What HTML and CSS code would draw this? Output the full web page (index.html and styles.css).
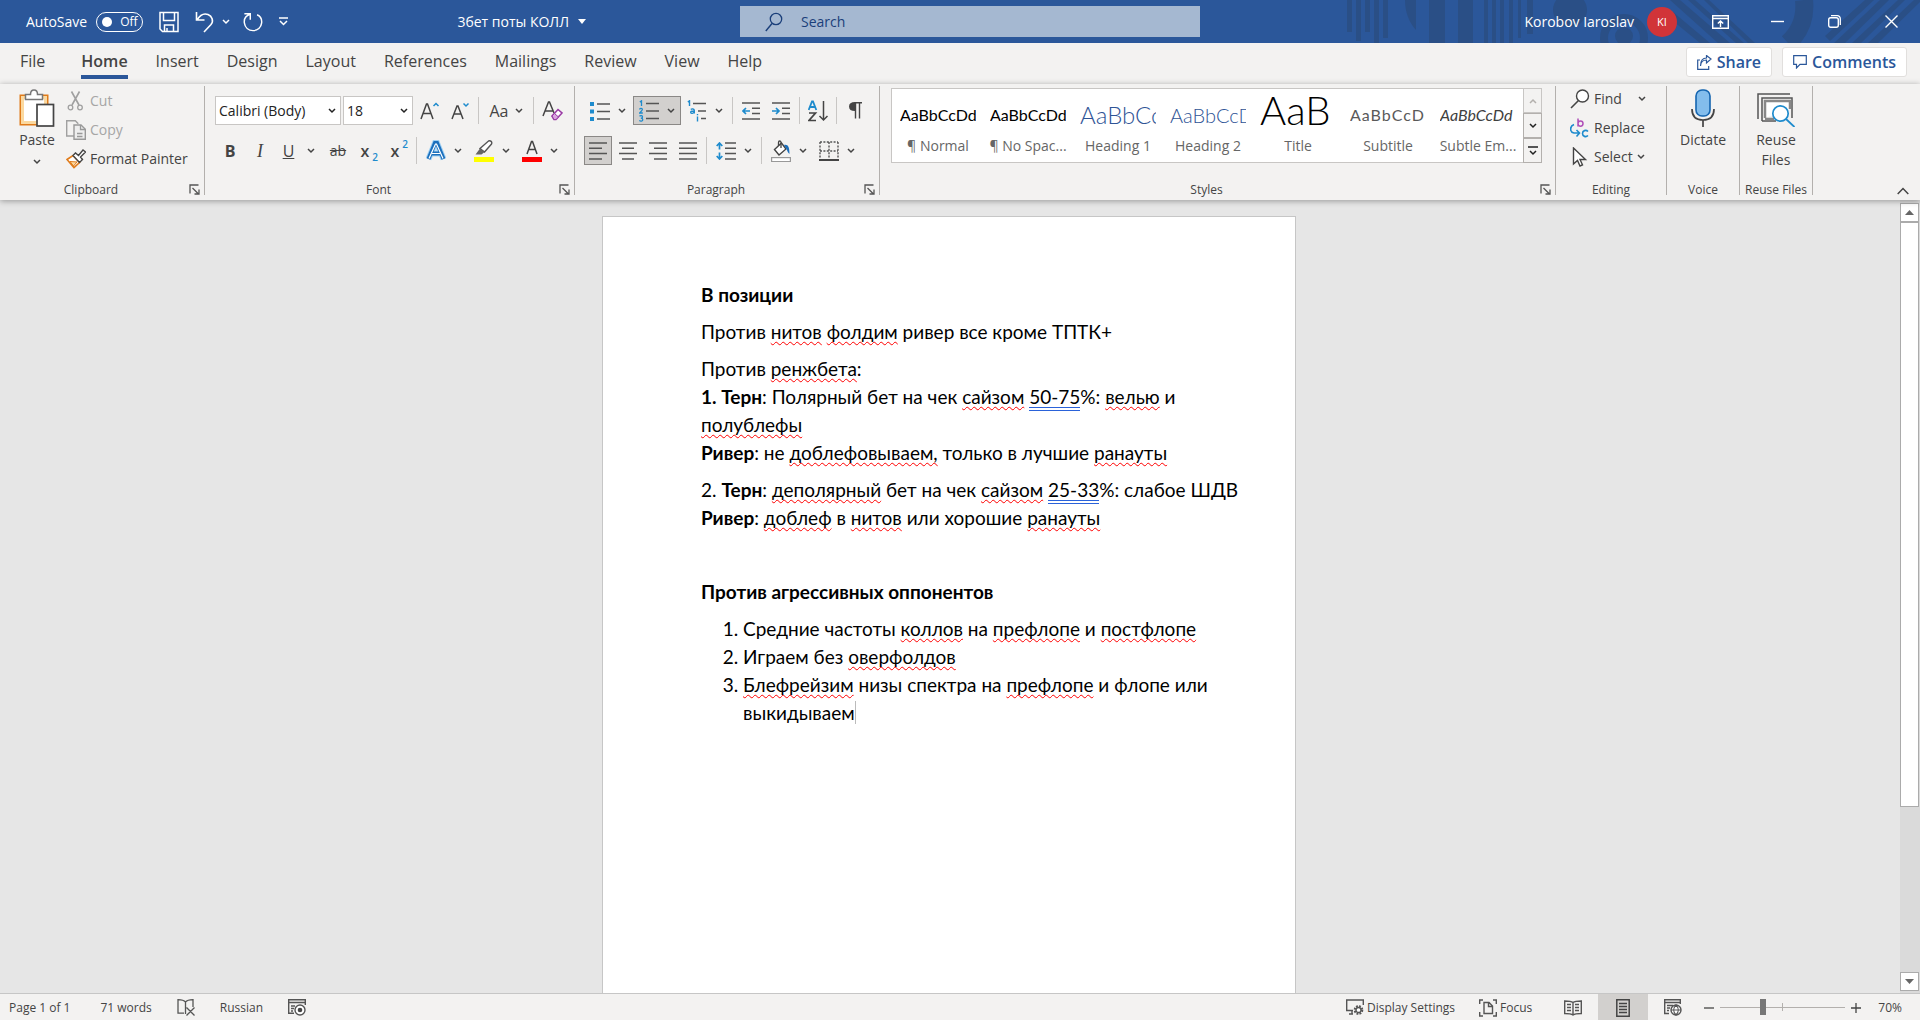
FILE: index.html
```html
<!DOCTYPE html>
<html lang="en">
<head>
<meta charset="utf-8">
<title>3бет поты КОЛЛ - Word</title>
<link rel="stylesheet" href="styles.css">
</head>
<body>
<svg class="defs" aria-hidden="true">
  <symbol id="chev" viewBox="0 0 8 6"><path d="M1 1l3 3 3-3" fill="none" stroke="currentColor" stroke-width="1.5"/></symbol>
  <symbol id="launch" viewBox="0 0 11 11"><path d="M1 9.500V1H9.500M3.500 4l5.500 5.500M10 5.500v4.500H5.500" fill="none" stroke="#555" stroke-width="1.300"/></symbol>
</svg>
<div class="app">
  <header class="titlebar">
    <svg class="pattern" viewBox="0 0 580 43" width="580" height="43" aria-hidden="true">
      <g fill="#2a4f86">
        <path d="M7 0h5v32H7zM16 0h5v41h-5zM25 0h5v32h-5zM34 0h5v43h-5zM43 0h5v38h-5zM65 0h11v30C69 22 65 12 65 0zM89 0h16v43H89zM118 0h15v43h-15zM144 0h4v43h-4zM152 0h4v43h-4zM160 0h4v43h-4zM169 0h4v43h-4zM178 0h3v38h-3zM187 0h6v34h-6z"/>
        <circle cx="230" cy="10" r="17"/><circle cx="284" cy="36" r="9"/>
        <path d="M330 0h10l50 43h-12zM348 0h7l49 43h-8zM364 0h5l46 43h-7zM333 12l37 31h-10l-27-22z"/>
        <path d="M485 36l40-36h9l-44 41zM494 43l46-43h9l-44 43zM512 43l46-43h7l-44 43zM528 43l46-43h6v2l-42 41z"/>
      </g>
      <circle cx="284" cy="38" r="20" fill="none" stroke="#2a4f86" stroke-width="8"/>
      <path d="M464 0c2 18-4 32-16 43" fill="none" stroke="#2a4f86" stroke-width="18"/>
    </svg>
    <div class="title-left">
      <span id="as">AutoSave</span>
      <button class="toggle" role="switch" aria-checked="false" aria-labelledby="as"><i></i>Off</button>
      <button class="qa save" aria-label="Save"><svg width="20" height="22" viewBox="0 0 20 22"><path d="M1 1.500h18v19H3.500L1 18zM4.500 1.500v8h11v-8M5.500 20.500v-6.500h9v6.500M8 17v3.500" fill="none" stroke="#fff" stroke-width="1.500"/></svg></button>
      <button class="qa undo" aria-label="Undo"><svg width="20" height="22" viewBox="0 0 20 22"><path d="M1.500 1v8h8M2 9C5 4 9 2 13 3.500c4 1.500 6 6.500 3 10L9 21" fill="none" stroke="#fff" stroke-width="1.600"/></svg><svg class="c"><use href="#chev"/></svg></button>
      <button class="qa redo" aria-label="Repeat"><svg width="20" height="22" viewBox="0 0 22 22"><path d="M1.500 2h6.500v6.500M8 2.500C3 4 1 8 1.500 12c.7 5 4.500 8.500 9.500 8.500s9-3.500 9.500-8.500c.4-4-1.500-7.500-5-9" fill="none" stroke="#fff" stroke-width="1.600"/></svg></button>
      <button class="qa" aria-label="Customize Quick Access Toolbar"><svg width="9" height="9" viewBox="0 0 9 9"><path d="M0 1h9M1 4l3.500 3.500L8 4" fill="none" stroke="#fff" stroke-width="1.500"/></svg></button>
      <button class="docname">3бет поты КОЛЛ <svg width="8" height="5" viewBox="0 0 8 5"><path d="M0 0h8L4 5z" fill="#fff"/></svg></button>
    </div>
    <label class="search"><svg width="18" height="20" viewBox="0 0 18 20"><circle cx="11" cy="7" r="5.700" fill="none" stroke="#1b3f7a" stroke-width="1.300"/><path d="M7 11.500L.8 19" stroke="#1b3f7a" stroke-width="1.400"/></svg><input type="text" placeholder="Search" aria-label="Search"></label>
    <div class="title-right">
      <span>Korobov Iaroslav</span><span class="avatar">KI</span>
      <button class="win rd" aria-label="Ribbon Display Options"><svg width="17" height="14" viewBox="0 0 17 14"><path d="M.7.700h15.600v12.600H.7zM.7 3.500h15.600M8.500 12V6M5.800 8.500L8.500 6l2.700 2.500" fill="none" stroke="#fff" stroke-width="1.400"/></svg></button>
      <button class="win" aria-label="Minimize"><svg width="13" height="13" viewBox="0 0 13 13"><path d="M0 6.500h13" stroke="#fff" stroke-width="1.400"/></svg></button>
      <button class="win" aria-label="Restore"><svg width="13" height="13" viewBox="0 0 13 13"><rect x=".7" y="2.700" width="9.600" height="9.600" rx="2" fill="none" stroke="#fff" stroke-width="1.400"/><path d="M3 .7h6.300a3 3 0 0 1 3 3V10" fill="none" stroke="#fff" stroke-width="1.300"/></svg></button>
      <button class="win" aria-label="Close"><svg width="13" height="13" viewBox="0 0 13 13"><path d="M.5.500l12 12M12.500.500l-12 12" stroke="#fff" stroke-width="1.400"/></svg></button>
    </div>
  </header>

  <nav class="tabs">
    <button>File</button><button class="active">Home</button><button>Insert</button><button>Design</button><button>Layout</button><button>References</button><button>Mailings</button><button>Review</button><button>View</button><button>Help</button>
    <div class="tab-actions">
      <button><svg width="15" height="15" viewBox="0 0 15 15"><path d="M3 5H.7v9.300h11V11M3.500 11c.3-4 2.500-6 6-6v3l4.500-4L9.500.500V3C5.500 3 3.500 6 3.500 11z" fill="none" stroke="#2b579a" stroke-width="1.200"/></svg>Share</button>
      <button><svg width="14" height="14" viewBox="0 0 14 14"><path d="M.7.700h12.600v8.600H7L3.500 13V9.300H.7z" fill="none" stroke="#2b579a" stroke-width="1.200"/></svg>Comments</button>
    </div>
  </nav>

  <div class="ribbon">
    <section class="group clip">
      <div class="body">
        <button class="big paste"><svg width="36" height="38" viewBox="0 0 36 38"><path d="M1.500 6.500h27v29h-27z" fill="#fff" stroke="#e07b1a" stroke-width="2"/><path d="M3.500 8.500h23v25h-23z" fill="none" stroke="#fbd9a0" stroke-width="3"/><path d="M6.500 10.500V5.500h5C11.500 2.500 13 1 15 1s3.500 1.500 3.500 4.500h5v5z" fill="#fff" stroke="#777" stroke-width="1.500"/><rect x="18" y="15.500" width="16.500" height="21.500" fill="#fff" stroke="#444" stroke-width="1.700"/></svg><span>Paste</span><svg class="c"><use href="#chev"/></svg></button>
        <div class="stack">
          <button disabled><svg width="20" height="20" viewBox="0 0 20 20"><path d="M5.500.500L13 14M13.500.500L6 14" fill="none" stroke="#a0a0a0" stroke-width="1.600"/><circle cx="4.500" cy="16.500" r="2.300" fill="none" stroke="#a0a0a0" stroke-width="1.300"/><circle cx="14" cy="16.500" r="2.300" fill="none" stroke="#a0a0a0" stroke-width="1.300"/></svg>Cut</button>
          <button disabled><svg width="20" height="20" viewBox="0 0 20 20"><path d="M9 16H.7V.700h8.600l3 3" fill="none" stroke="#a0a0a0" stroke-width="1.400"/><path d="M8 5h7l4.300 4.300v10H8z" fill="#eee" stroke="#999" stroke-width="1.400"/><path d="M14.500 5v4.500h4.800M11 13.500h5.500M11 16.500h5.500" fill="none" stroke="#999" stroke-width="1.300"/></svg>Copy</button>
          <button><svg width="20" height="20" viewBox="0 0 20 20"><path d="M1 10.500L7 6.500l6.500 7L8 18.500z" fill="#fff" stroke="#e07b1a" stroke-width="1.600"/><path d="M4 12.500l7 .5-3.500 4z" fill="#fbd9a0" stroke="#e07b1a"/><path d="M7 6.500l2.500-2.500 3 2.500L17 1l2.500 2-5 5 2 2.500-3 3z" fill="#fff" stroke="#444" stroke-width="1.400"/></svg>Format Painter</button>
        </div>
      </div>
      <footer class="l">Clipboard<button aria-label="Clipboard settings"><svg width="11" height="11"><use href="#launch"/></svg></button></footer>
    </section>

    <section class="group font">
      <div class="body rows">
        <div class="row">
          <label class="combo face"><input type="text" value="Calibri (Body)" aria-label="Font"><svg class="c"><use href="#chev"/></svg></label>
          <label class="combo size"><input type="text" value="18" aria-label="Font size"><svg class="c"><use href="#chev"/></svg></label>
          <button class="t" aria-label="Increase font size"><svg width="20" height="20" viewBox="0 0 20 20"><path d="M1 18L6.500 3h1L13 18M3 12.500h8" fill="none" stroke="#444" stroke-width="1.500"/><path d="M13.500 5L16 2.500 18.500 5" fill="none" stroke="#1e8bcd" stroke-width="1.500"/></svg></button>
          <button class="t" aria-label="Decrease font size"><svg width="20" height="20" viewBox="0 0 20 20"><path d="M2 18L7 5h1l5 13M4 13h7" fill="none" stroke="#444" stroke-width="1.500"/><path d="M13.500 2.500L16 5l2.500-2.500" fill="none" stroke="#1e8bcd" stroke-width="1.500"/></svg></button>
          <i class="sep"></i>
          <button class="t split case" aria-label="Change case"><b>Aa</b><svg class="c"><use href="#chev"/></svg></button>
          <i class="sep"></i>
          <button class="t" aria-label="Clear formatting"><svg width="21" height="22" viewBox="0 0 21 22"><path d="M1 16L6.500 2h1L12 13M3 11h8" fill="none" stroke="#444" stroke-width="1.500"/><path d="M10 16l6-6.500 4 3.500-6 6.500h-2z" fill="#fff" stroke="#9a3aa5" stroke-width="1.600"/><path d="M10 16l2.500-2.500 4 3.500-2.500 2.500h-2z" fill="#d9a5df" stroke="#9a3aa5"/></svg></button>
        </div>
        <div class="row">
          <button class="t bold">B</button><button class="t ital">I</button>
          <button class="t split und"><u>U</u><svg class="c"><use href="#chev"/></svg></button>
          <button class="t strike"><s>ab</s></button>
          <button class="t script">x<sub>2</sub></button><button class="t script">x<sup>2</sup></button>
          <i class="sep"></i>
          <button class="t split" aria-label="Text effects"><svg width="20" height="22" viewBox="0 0 20 22"><path d="M2.500 19L9 3h2l6.500 16M5.500 13.500h9" fill="none" stroke="#9fd0f3" stroke-width="6"/><path d="M2.500 19L9 3h2l6.500 16M5.500 13.500h9" fill="none" stroke="#1b6fbc" stroke-width="4"/><path d="M3 18.500L9.500 4h1L17 18.500M6 13.500h8" fill="none" stroke="#fff" stroke-width="1.200"/></svg><svg class="c"><use href="#chev"/></svg></button>
          <button class="t split" aria-label="Text highlight color"><svg width="20" height="22" viewBox="0 0 20 22"><path d="M0 17h20v5H0z" fill="#ff0"/><path d="M6 8.500L14.500 1c2-.8 4 .8 3 3L10.500 12z" fill="#fff" stroke="#555" stroke-width="1.400"/><path d="M6 8.500l4.500 3.500-3 2.500H1.500z" fill="#666"/></svg><svg class="c"><use href="#chev"/></svg></button>
          <button class="t split" aria-label="Font color"><svg width="20" height="22" viewBox="0 0 20 22"><path d="M0 17h20v5H0z" fill="red"/><path d="M5 14L9.500 1.500h1L15 14M6.500 9.500h7" fill="none" stroke="#444" stroke-width="1.500"/></svg><svg class="c"><use href="#chev"/></svg></button>
        </div>
      </div>
      <footer class="l">Font<button aria-label="Font settings"><svg width="11" height="11"><use href="#launch"/></svg></button></footer>
    </section>

    <section class="group para">
      <div class="body rows">
        <div class="row">
          <button class="t split bul" aria-label="Bullets"><svg width="20" height="20" viewBox="0 0 20 20"><path d="M7 3h13M7 10.500h13M7 18h13" stroke="#555" stroke-width="1.600"/><path d="M0 1h4v4H0zM0 8.500h4v4H0zM0 16h4v4H0z" fill="#1e8bcd"/></svg><svg class="c"><use href="#chev"/></svg></button>
          <button class="t split on" aria-label="Numbering"><svg width="20" height="22" viewBox="0 0 20 22"><path d="M7 3.500h13M7 11h13M7 18.500h13" stroke="#555" stroke-width="1.600"/><path d="M.8 2L2.500.8V6M.5 9.500C1 8 3.500 8 3.300 9.700 3 11 1 12 .6 13h3.200M.5 16.300c1-1 3-.8 3 .6 0 .8-.8 1.300-1.700 1.300 1 0 2 .5 2 1.500 0 1.500-2.300 1.800-3.500.8" fill="none" stroke="#1e8bcd" stroke-width="1.300"/></svg><svg class="c"><use href="#chev"/></svg></button>
          <button class="t split" aria-label="Multilevel list"><svg width="20" height="22" viewBox="0 0 20 22"><path d="M6 3.500h13M11 11h8M14 18.500h5" stroke="#555" stroke-width="1.600"/><path d="M.8 2L2.500.8V6M3.800 9.500c1-1 3.500-.8 3.500 1v3M7.300 11c-2 0-3.800.2-3.600 1.400.3 1.500 3 1.200 3.600-.6M10.500 16.500v5M10.500 14v1.300" fill="none" stroke="#1e8bcd" stroke-width="1.400"/></svg><svg class="c"><use href="#chev"/></svg></button>
          <i class="sep"></i>
          <button class="t" aria-label="Decrease indent"><svg width="18" height="18" viewBox="0 0 18 18"><path d="M0 1h18M10 6.300h8M10 11.500h8M0 17h18" stroke="#555" stroke-width="1.600"/><path d="M8 9H1M4 6L1 9l3 3" fill="none" stroke="#1e8bcd" stroke-width="1.700"/></svg></button>
          <button class="t" aria-label="Increase indent"><svg width="18" height="18" viewBox="0 0 18 18"><path d="M0 1h18M10 6.300h8M10 11.500h8M0 17h18" stroke="#555" stroke-width="1.600"/><path d="M0 9h7M4 6l3 3-3 3" fill="none" stroke="#1e8bcd" stroke-width="1.700"/></svg></button>
          <i class="sep"></i>
          <button class="t" aria-label="Sort"><svg width="20" height="22" viewBox="0 0 20 22"><path d="M.7 10L4 1.500h1L8.300 10M2 7h5" fill="none" stroke="#1e8bcd" stroke-width="1.800"/><path d="M1 13h6.500L1 20.500h7" fill="none" stroke="#444" stroke-width="1.700"/><path d="M15.500 1v19M11.500 16l4 4 4-4" fill="none" stroke="#444" stroke-width="1.500"/></svg></button>
          <i class="sep"></i>
          <button class="t" aria-label="Show paragraph marks"><svg width="13" height="17" viewBox="0 0 13 17"><path d="M5.500.700H13M6.500 1v15.500M10.500 1v15.500" stroke="#444" stroke-width="1.400"/><path d="M6 0v9C2 9 0 7.500 0 4.500S2 0 6 0z" fill="#444"/></svg></button>
        </div>
        <div class="row aligns">
          <button class="t on" aria-label="Align left"><svg width="18" height="18" viewBox="0 0 18 18"><path d="M0 1h18M0 6.300h13M0 11.500h18M0 17h13" stroke="#555" stroke-width="1.600"/></svg></button>
          <button class="t" aria-label="Center"><svg width="18" height="18" viewBox="0 0 18 18"><path d="M0 1h18M3 6.300h12M0 11.500h18M3 17h12" stroke="#555" stroke-width="1.600"/></svg></button>
          <button class="t" aria-label="Align right"><svg width="18" height="18" viewBox="0 0 18 18"><path d="M0 1h18M5 6.300h13M0 11.500h18M5 17h13" stroke="#555" stroke-width="1.600"/></svg></button>
          <button class="t" aria-label="Justify"><svg width="18" height="18" viewBox="0 0 18 18"><path d="M0 1h18M0 6.300h18M0 11.500h18M0 17h18" stroke="#555" stroke-width="1.600"/></svg></button>
          <i class="sep"></i>
          <button class="t split" aria-label="Line spacing"><svg width="20" height="18" viewBox="0 0 20 18"><path d="M9 1h11M9 6.300h11M9 11.500h11M9 17h11" stroke="#555" stroke-width="1.600"/><path d="M3.500 1v6.500M3.500 10.500V17M.7 4l2.800-3 2.800 3M.7 14l2.800 3 2.800-3" fill="none" stroke="#1e8bcd" stroke-width="1.700"/></svg><svg class="c"><use href="#chev"/></svg></button>
          <i class="sep"></i>
          <button class="t split" aria-label="Shading"><svg width="20" height="22" viewBox="0 0 20 22"><rect x=".6" y="17.600" width="18.800" height="4" fill="#fff" stroke="#999" stroke-width="1.200"/><path d="M3.500 9.500l7-6.500 4.500 6-7 6z" fill="#fff" stroke="#444" stroke-width="1.400"/><path d="M10 8V2.500C10 .5 7.500.500 7.500 2.500V6" fill="none" stroke="#444" stroke-width="1.300"/><path d="M13 5c4-1 5.500 2 5.500 9-1.500-1-2-3-3-5z" fill="#1b6fbc"/></svg><svg class="c"><use href="#chev"/></svg></button>
          <button class="t split" aria-label="Borders"><svg width="20" height="20" viewBox="0 0 20 20"><path d="M1 1h18M1 10h18M1 1v17M10 1v17M19 1v17" fill="none" stroke="#555" stroke-width="1.400" stroke-dasharray="2 1.400"/><path d="M0 19h20" stroke="#444" stroke-width="2"/></svg><svg class="c"><use href="#chev"/></svg></button>
        </div>
      </div>
      <footer class="l">Paragraph<button aria-label="Paragraph settings"><svg width="11" height="11"><use href="#launch"/></svg></button></footer>
    </section>

    <section class="group styles">
      <div class="body">
        <div class="gallery">
          <button><span class="smp">AaBbCcDd</span><span>¶ Normal</span></button>
          <button><span class="smp">AaBbCcDd</span><span>¶ No Spac...</span></button>
          <button><span class="smp h1">AaBbCc</span><span>Heading 1</span></button>
          <button><span class="smp h2">AaBbCcD</span><span>Heading 2</span></button>
          <button><span class="smp ttl">AaB</span><span>Title</span></button>
          <button><span class="smp sub">AaBbCcD</span><span>Subtitle</span></button>
          <button><span class="smp em">AaBbCcDd</span><span>Subtle Em...</span></button>
        </div>
        <div class="gscroll">
          <button disabled aria-label="Previous styles"><svg class="c flip"><use href="#chev"/></svg></button>
          <button aria-label="Next styles"><svg class="c"><use href="#chev"/></svg></button>
          <button aria-label="More styles"><svg width="10" height="10" viewBox="0 0 10 10"><path d="M0 1h10M2 5l3 3 3-3" fill="none" stroke="#222" stroke-width="1.500"/></svg></button>
        </div>
      </div>
      <footer class="l">Styles<button aria-label="Styles settings"><svg width="11" height="11"><use href="#launch"/></svg></button></footer>
    </section>

    <section class="group edit">
      <div class="body">
        <div class="stack">
          <button class="find"><svg width="20" height="20" viewBox="0 0 20 20"><circle cx="12.500" cy="7" r="6" fill="#fff" stroke="#444" stroke-width="1.400"/><path d="M8.500 11.500L1 19" stroke="#444" stroke-width="1.600"/></svg>Find<svg class="c"><use href="#chev"/></svg></button>
          <button><svg width="20" height="20" viewBox="0 0 20 20"><path d="M8 .5v8M8 5.500c0-3.500 5-3.500 5 0s-5 3.500-5 0" fill="none" stroke="#b04fb9" stroke-width="1.500"/><path d="M18 13.500c-2-2-5.500-1-5.500 2s3.500 4 5.500 2M4 6.500C-.5 8-.5 14 4 15h5M6.500 12l3 3-3 3.500" fill="none" stroke="#1e8bcd" stroke-width="1.600"/></svg>Replace</button>
          <button class="sel"><svg width="20" height="20" viewBox="0 0 20 20"><path d="M3.500 1v16l4-3.500 2.500 5.500 2.500-1.200L10 12.500h5.500z" fill="#fff" stroke="#444" stroke-width="1.400"/></svg>Select<svg class="c"><use href="#chev"/></svg></button>
        </div>
      </div>
      <footer>Editing</footer>
    </section>

    <section class="group voice">
      <div class="body">
        <button class="big"><svg width="24" height="38" viewBox="0 0 24 38"><rect x="5" y="1" width="14" height="26" rx="6" fill="#83bdec" stroke="#1565b0" stroke-width="1.600"/><path d="M1 20c0 7 4 11 11 11s11-4 11-11M12 31v7" fill="none" stroke="#444" stroke-width="1.700"/></svg><span>Dictate</span></button>
      </div>
      <footer>Voice</footer>
    </section>

    <section class="group reuse">
      <div class="body">
        <button class="big"><svg width="38" height="38" viewBox="0 0 38 38"><path d="M1 30V5h32" fill="none" stroke="#555" stroke-width="1.500"/><path d="M5 32V9h30v20M5 32h14" fill="none" stroke="#555" stroke-width="1.500"/><path d="M8 29V12h25v8M8 30h9" fill="#fff" stroke="#888" stroke-width="2.500"/><circle cx="23.500" cy="24.500" r="7.700" fill="#fff" stroke="#1e8bcd" stroke-width="1.700"/><path d="M29 30l8.500 8" stroke="#1e8bcd" stroke-width="1.800"/></svg><span>Reuse<br>Files</span></button>
      </div>
      <footer>Reuse Files</footer>
    </section>
    <div class="ribbon-end">
      <button aria-label="Collapse the ribbon"><svg width="12" height="8" viewBox="0 0 12 8"><path d="M.7 7L6 1.500 11.300 7" fill="none" stroke="#444" stroke-width="1.500"/></svg></button>
    </div>
  </div>

  <main class="work">
    <div class="canvas">
      <article class="page" lang="ru">
        <p><b>В позиции</b></p>
        <p>Против <span class="sp">нитов</span> <span class="sp">фолдим</span> ривер все кроме ТПТК+</p>
        <p>Против <span class="sp">ренжбета</span>:<br><b>1. Терн</b>: Полярный бет на чек <span class="sp">сайзом</span> <span class="gr">50-75</span>%: <span class="sp">велью</span> и <span class="sp">полублефы</span><br><b>Ривер</b>: не <span class="sp">доблефовываем,</span> только в лучшие <span class="sp">ранауты</span></p>
        <p>2. <b>Терн</b>: <span class="sp">деполярный</span> бет на чек <span class="sp">сайзом</span> <span class="gr">25-33</span>%: слабое ШДВ<br><b>Ривер</b>: <span class="sp">доблеф</span> в <span class="sp">нитов</span> или хорошие <span class="sp">ранауты</span></p>
        <p><br></p>
        <p><b>Против агрессивных оппонентов</b></p>
        <ol>
          <li>Средние частоты <span class="sp">коллов</span> на <span class="sp">префлопе</span> и <span class="sp">постфлопе</span></li>
          <li>Играем без <span class="sp">оверфолдов</span></li>
          <li><span class="sp">Блефрейзим</span> низы спектра на <span class="sp">префлопе</span> и флопе или <span class="caret">выкидываем</span></li>
        </ol>
      </article>
    </div>
    <div class="vscroll">
      <button aria-label="Scroll up"><svg width="9" height="5" viewBox="0 0 9 5"><path d="M0 5h9L4.500 0z" fill="#666"/></svg></button>
      <div class="track"><div class="thumb"></div></div>
      <button aria-label="Scroll down"><svg width="9" height="5" viewBox="0 0 9 5"><path d="M0 0h9L4.500 5z" fill="#666"/></svg></button>
    </div>
  </main>

  <footer class="status">
    <button class="pages">Page 1 of 1</button>
    <button>71 words</button>
    <button aria-label="Proofing errors"><svg width="18" height="17" viewBox="0 0 18 17"><path d="M8.500 13V3C7 1.200 5 .7 1 .7v13.500h6M8.500 3C10 1.200 12 .7 16 .7V8M8.500 13v2M9.500 8.500l8 8M17.500 8.500l-8 8" fill="none" stroke="#555" stroke-width="1.300"/></svg></button>
    <button>Russian</button>
    <button aria-label="Macro recording"><svg width="18" height="17" viewBox="0 0 18 17"><path d="M6 14.300H.7V.700h16.600V6M.7 3.500h16.600M3 7h4M3 9.500h3M3 12h2" fill="none" stroke="#555" stroke-width="1.400"/><circle cx="12" cy="11" r="5" fill="#fff" stroke="#555" stroke-width="1.400"/><circle cx="12" cy="11" r="2.300" fill="#444"/></svg></button>
    <div class="status-right">
      <button><svg width="18" height="17" viewBox="0 0 18 17"><path d="M7 11.500H.7V1h16.600v5M3 15h4M6 11.500V15" fill="none" stroke="#555" stroke-width="1.400"/><circle cx="12.500" cy="11" r="3.300" fill="none" stroke="#555" stroke-width="3" stroke-dasharray="1.600 1"/><circle cx="12.500" cy="11" r="2.500" fill="#fff" stroke="#555" stroke-width="1.300"/></svg>Display Settings</button>
      <button class="focus"><svg width="18" height="18" viewBox="0 0 18 18"><path d="M4 1H.7v4M14 1h3.300v4M4 17H.7v-4M14 17h3.300v-4" fill="none" stroke="#555" stroke-width="1.400"/><path d="M5 3.500h5l3.500 3.500v7.500H5zM9.500 3.500V7.500h4" fill="none" stroke="#555" stroke-width="1.400"/></svg>Focus</button>
      <button class="view" aria-label="Read Mode"><svg width="18" height="16" viewBox="0 0 18 16"><path d="M9 2.500C7 1 4 1 .7 1v12.500c3.300 0 6.300 0 8.300 1.500 2-1.500 5-1.500 8.300-1.500V1C14 1 11 1 9 2.500zV15M3 4.500h4M3 7.500h4M3 10.500h4M11 4.500h4M11 7.500h4M11 10.500h4" fill="none" stroke="#555" stroke-width="1.400"/></svg></button>
      <button class="view on" aria-label="Print Layout"><svg width="14" height="18" viewBox="0 0 14 18"><path d="M.8.800h12.400v16.400H.8zM3 4.500h8M3 7.500h8M3 10.500h8M3 13.500h8" fill="none" stroke="#444" stroke-width="1.500"/></svg></button>
      <button class="view" aria-label="Web Layout"><svg width="18" height="17" viewBox="0 0 18 17"><path d="M5 14.500H.7V.700h15.600V5M.7 3.500h15.600M3 6.500h6M3 9h3M3 11.500h2" fill="none" stroke="#555" stroke-width="1.400"/><circle cx="12" cy="11" r="5" fill="#fff" stroke="#555" stroke-width="1.400"/><path d="M7 11h10M12 6c-3 3-3 7 0 10 3-3 3-7 0-10z" fill="none" stroke="#555" stroke-width="1.200"/></svg></button>
      <button class="zm" aria-label="Zoom out"><svg width="10" height="10" viewBox="0 0 10 10"><path d="M0 5h10" stroke="#444" stroke-width="1.300"/></svg></button>
      <input type="range" min="10" max="190" value="70" aria-label="Zoom">
      <button class="zm" aria-label="Zoom in"><svg width="10" height="10" viewBox="0 0 10 10"><path d="M0 5h10M5 0v10" stroke="#444" stroke-width="1.300"/></svg></button>
      <button class="pct">70%</button>
    </div>
  </footer>
</div>
</body>
</html>
```
FILE: styles.css
```css
* { box-sizing: border-box; }
html, body { height: 100%; margin: 0; }
body { font: 14px/18px "Open Sans", "Noto Sans", sans-serif; color: #444; overflow: hidden; }
button, input { font: inherit; color: inherit; }
button { background: none; border: 0; padding: 0; margin: 0; display: flex; align-items: center; white-space: nowrap; }
svg { flex: none; display: block; }
.defs { position: absolute; width: 0; height: 0; }
.c { width: 8px; height: 6px; }
.flip { transform: rotate(180deg); }
.app { height: 100vh; display: flex; flex-direction: column; background: #f3f2f1; }

/* title bar */
.titlebar { position: relative; height: 43px; flex: none; display: grid; grid-template-columns: minmax(0, 1fr) 460px minmax(0, 1fr); align-items: center; padding-left: 20px; background: #2b579a; color: #fff; }
.pattern { position: absolute; right: 0; top: 0; }
.title-left, .title-right { position: relative; display: flex; align-items: center; }
.title-left { padding-left: 6px; gap: 16px; }
.toggle { width: 47px; height: 20px; margin-left: -7px; border: 1px solid #fff; border-radius: 10px; padding-left: 5px; gap: 8px; font-size: 12px; }
.toggle i { width: 10px; height: 10px; border-radius: 50%; background: #fff; }
.undo { gap: 7px; }
.redo { margin-left: -3px; }
.docname { margin-left: auto; margin-right: 154px; gap: 9px; }
.search { position: relative; height: 31px; display: flex; align-items: center; gap: 18px; padding-left: 25px; background: #a5b8d1; }
.search input { flex: 1; min-width: 0; background: none; border: 0; padding: 0; outline: 0; color: #1b3f7a; }
.search input::placeholder { color: #1b3f7a; opacity: 1; }
.title-right { justify-content: flex-end; }
.avatar { width: 30px; height: 30px; margin: 0 15px 0 13px; border-radius: 50%; background: #d13438; font-size: 11px; line-height: 30px; text-align: center; }
.win { width: 57px; height: 43px; justify-content: center; }

/* tabs */
.tabs { height: 41px; flex: none; display: flex; align-items: flex-start; padding: 4px 13px 0 20px; gap: 28px; font-size: 16px; line-height: 26px; }
.tabs > button { height: 32px; border-bottom: 4px solid transparent; }
.tabs > button:first-child { margin-right: 8px; }
.tabs > .active { font-weight: 600; border-color: #2b579a; }
.tab-actions { margin-left: auto; display: flex; gap: 10px; }
.tab-actions button { height: 30px; padding: 0 10px; gap: 5px; background: #fff; border: 1px solid #e1dfdd; border-radius: 3px; color: #2b579a; font-weight: 600; }

/* ribbon */
.ribbon { position: relative; z-index: 1; flex: none; display: flex; height: 116px; padding-bottom: 5px; box-shadow: 0 1px 6px rgba(0, 0, 0, .35); }
.group { display: flex; flex-direction: column; border-right: 1px solid #b3b0ad; margin-top: 2px; flex: none; }
.body { flex: 1; display: flex; min-height: 0; }
.group footer { position: relative; height: 10px; display: flex; justify-content: center; align-items: center; font-size: 12px; line-height: 16px; white-space: nowrap; }
.group footer button { position: absolute; right: 4px; bottom: 0; }
.group footer.l { padding-right: 22px; }
.clip { width: 205px; padding-left: 19px; }
.clip footer { margin-left: -19px; }
.font { width: 370px; padding-left: 10px; }
.font footer { margin-left: -10px; }
.para { width: 305px; padding-left: 8px; }
.para footer { margin-left: -8px; }
.styles { flex: 1; min-width: 0; padding-left: 11px; }
.styles footer { margin-left: -11px; }
.edit { width: 111px; padding-left: 14px; }
.edit footer { margin-left: -14px; }
.voice { width: 73px; }
.reuse { width: 73px; }
.ribbon-end { width: 107px; flex: none; display: flex; justify-content: flex-end; align-items: flex-end; padding-right: 11px; }
.big { flex-direction: column; width: 100%; padding-top: 3px; white-space: normal; }
.big span { margin: 3px 0 9px; line-height: 20px; text-align: center; }
.paste { width: 36px; }
.stack { display: flex; flex-direction: column; gap: 9px; padding-top: 5px; }
.stack button { gap: 4px; height: 20px; }
.clip .stack { padding-left: 11px; }
.stack button:disabled { color: #a6a6a6; }
.edit .stack { padding-top: 3px; }
.find .c { margin-left: 12px; }
.rows { flex-direction: column; gap: 11px; padding-top: 10px; }
.row { display: flex; align-items: center; height: 29px; }
.t { width: 30px; height: 29px; justify-content: center; font-size: 16px; }
.split { width: 48px; gap: 8px; }
.bul { width: 50px; }
.on { background: #d2d0ce; outline: 1px solid #8a8886; outline-offset: -1px; }
.sep { width: 1px; height: 27px; margin: 0 3px; background: #c8c6c4; }
.combo { display: flex; align-items: center; height: 29px; margin-right: 2px; padding: 0 4px 0 3px; background: #fff; border: 1px solid #c8c6c4; color: #222; }
.combo input { flex: 1; min-width: 0; width: 0; border: 0; padding: 0; outline: 0; background: none; }
.face { width: 126px; }
.size { width: 70px; }
.case b { font-weight: 400; }
.case { gap: 6px; }
.und { gap: 13px; }
.bold { font-weight: 700; }
.ital { font-family: "Liberation Serif", serif; font-style: italic; font-size: 18px; }
.strike { font-size: 14px; }
.script { font-weight: 600; position: relative; padding-right: 6px; }
.script sub, .script sup { position: absolute; right: 5px; font-size: 10px; line-height: 10px; color: #1e8bcd; }
.script sub { bottom: 3px; }
.script sup { top: 3px; }
.aligns .on { width: 28px; margin: 0 1px; }

.gallery { flex: 1; min-width: 0; height: 75px; margin-top: 2px; display: flex; overflow: hidden; background: #fff; border: 1px solid #c8c6c4; padding-left: 1px; }
.gallery button { flex: 1 1 0; min-width: 0; flex-direction: column; color: #666; }
.gallery button > span:last-child { line-height: 18px; padding-top: 2px; }
.smp { width: 76px; height: 46px; line-height: 52px; overflow: hidden; text-align: left; font-family: Lato, sans-serif; font-size: 16px; color: #000; }
.h1 { font-size: 24px; color: #2f5496; font-weight: 300; }
.h2 { font-size: 20px; color: #2f5496; font-weight: 300; }
.ttl { font-size: 40px; line-height: 42px; font-weight: 300; }
.sub { color: #5a5a5a; letter-spacing: 1px; }
.em { font-style: italic; color: #404040; }
.gscroll { display: flex; flex-direction: column; width: 19px; height: 75px; margin: 2px 13px 0 -1px; color: #222; }
.gscroll button { flex: 1; justify-content: center; border: 1px solid #b3b0ad; }
.gscroll button:disabled { color: #b3b0ad; border-color: #c8c6c4; }

/* document */
.work { flex: 1; min-height: 0; display: flex; background: #e6e6e6; }
.canvas { flex: 1; display: flex; justify-content: center; overflow: hidden; padding: 16px 2px 0 0; }
.page { width: 694px; background: #fff; border: 1px solid #c6c6c6; border-bottom: 0; padding: 64px 50px 0 98px; font: 19px/28px Lato, Carlito, sans-serif; color: #000; }
.page p { margin: 0 0 9px; }
.page ol { margin: 0; padding-left: 42px; }
.sp { text-decoration: underline wavy #f00 1px; text-decoration-skip-ink: none; text-underline-offset: 2px; }
.gr { display: inline-block; line-height: 20px; border-bottom: 4px double #2a62d9; }
.caret { border-right: 1px solid #bbb; }
.vscroll { width: 20px; display: flex; flex-direction: column; padding: 3px 1px 2px 0; background: #dadada; }
.vscroll button { height: 19px; justify-content: center; background: #fff; border: 1px solid #ababab; }
.track { flex: 1; }
.thumb { height: 78%; background: #fff; border: 1px solid #ababab; }

/* status bar */
.status { flex: none; height: 27px; display: flex; align-items: center; padding-left: 9px; gap: 25px; border-top: 1px solid #c6c6c6; font-size: 12px; }
.status button { height: 26px; padding-top: 1px; }
.pages { margin-right: 5px; }
.status-right { margin-left: auto; display: flex; align-items: center; padding-right: 18px; }
.status-right button { gap: 3px; }
.focus { margin: 0 16px 0 24px; }
.view { width: 50px; justify-content: center; }
.status .on { outline: 0; }
.zm { margin: 0 6px; }
.pct { margin-left: 11px; }
input[type=range] { -webkit-appearance: none; appearance: none; width: 125px; height: 20px; margin: 0; background: linear-gradient(#b3b0ad, #b3b0ad) 50% 50% / 100% 1px no-repeat, linear-gradient(#b3b0ad, #b3b0ad) 50% 50% / 1px 8px no-repeat; }
input[type=range]::-webkit-slider-thumb { -webkit-appearance: none; width: 6px; height: 16px; background: #777; }
```
